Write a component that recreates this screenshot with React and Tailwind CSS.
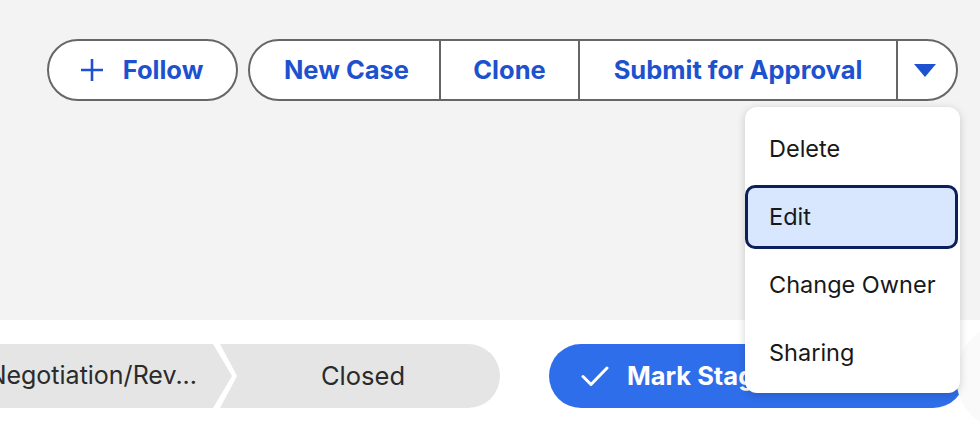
import React from "react";

function PlusIcon() {
  return (
    <svg width="24" height="24" viewBox="0 0 24 24" fill="none">
      <path d="M12 1v22M1 12h22" stroke="currentColor" strokeWidth="2.6" />
    </svg>
  );
}

function CheckIcon() {
  return (
    <svg width="28" height="22" viewBox="0 0 28 22" fill="none">
      <path
        d="M2 11.5l8 8L26 3"
        stroke="currentColor"
        strokeWidth="3"
        strokeLinecap="round"
        strokeLinejoin="round"
      />
    </svg>
  );
}

const menuItems = ["Delete", "Edit", "Change Owner", "Sharing"];

export default function App() {
  return (
    <div
      className="relative w-[980px] h-[428px] overflow-hidden bg-white"
      style={{ fontFamily: "Inter, 'Noto Sans', sans-serif" }}
    >
      {/* header area */}
      <div className="h-[320px] bg-[#f3f3f3] pt-[39px] pr-[22px] flex justify-end items-start gap-[10px]">
        <button className="h-[62px] w-[191px] rounded-full border-2 border-[#666666] bg-white flex items-center justify-center gap-[19px] text-[#1d51cf] text-[25.5px] font-bold pr-[2px]">
          <PlusIcon />
          <span>Follow</span>
        </button>
        <div className="h-[62px] flex rounded-full border-2 border-[#666666] bg-white overflow-hidden text-[#1d51cf] text-[25.5px] font-bold">
          <button className="w-[191px] flex items-center justify-center border-r-2 border-[#666666] pl-[4px]">
            New Case
          </button>
          <button className="w-[139px] flex items-center justify-center border-r-2 border-[#666666]">
            Clone
          </button>
          <button className="w-[318px] flex items-center justify-center border-r-2 border-[#666666]">
            Submit for Approval
          </button>
          <button className="w-[58px] flex items-center justify-center pr-[4px]">
            <svg width="22" height="13" viewBox="0 0 22 13">
              <path d="M0 0h22L11 13z" fill="#1d51cf" />
            </svg>
          </button>
        </div>
      </div>

      {/* path row */}
      <div className="flex items-center pt-[24px] ml-[-40px]">
        <div className="h-[64px] w-[272px] bg-[#e5e5e5] flex items-center justify-end pr-[35px] text-[25px] text-[#2b2b2b] whitespace-nowrap [clip-path:polygon(0_0,calc(100%-19px)_0,100%_50%,calc(100%-19px)_100%,0_100%)]">
          Negotiation/Rev...
        </div>
        <div className="h-[64px] w-[280px] ml-[-12px] bg-[#e5e5e5] rounded-r-full flex items-center justify-center pl-[6px] text-[25.5px] text-[#2b2b2b] [clip-path:polygon(0_0,100%_0,100%_100%,0_100%,17px_50%)]">
          Closed
        </div>
        <button className="h-[64px] w-[416px] ml-[49px] shrink-0 rounded-full bg-[#2f6eea] text-white text-[25.5px] font-bold flex items-center gap-[18px] pl-[32px] whitespace-nowrap overflow-hidden">
          <CheckIcon />
          <span>Mark Stage as Complete</span>
        </button>
      </div>

      {/* faint edge element on the right */}
      <div className="absolute left-[956px] top-[322px] w-[80px] h-[110px] rounded-l-full bg-[#fafafa]" />

      {/* dropdown menu */}
      <div className="absolute left-[745px] top-[107px] w-[215px] h-[286px] bg-white rounded-[12px] shadow-[0_2px_8px_rgba(0,0,0,0.18)] pt-[10px] flex flex-col gap-[4px]">
        {menuItems.map((item) => (
          <div
            key={item}
            className={
              item === "Edit"
                ? "h-[64px] mr-[2px] flex items-center pl-[21px] text-[23.5px] text-[#181818] bg-[#d8e6fe] border-[3px] border-[#0c1f5a] rounded-[10px]"
                : "h-[64px] flex items-center pl-[24px] text-[23.5px] text-[#181818]"
            }
          >
            {item}
          </div>
        ))}
      </div>
    </div>
  );
}
